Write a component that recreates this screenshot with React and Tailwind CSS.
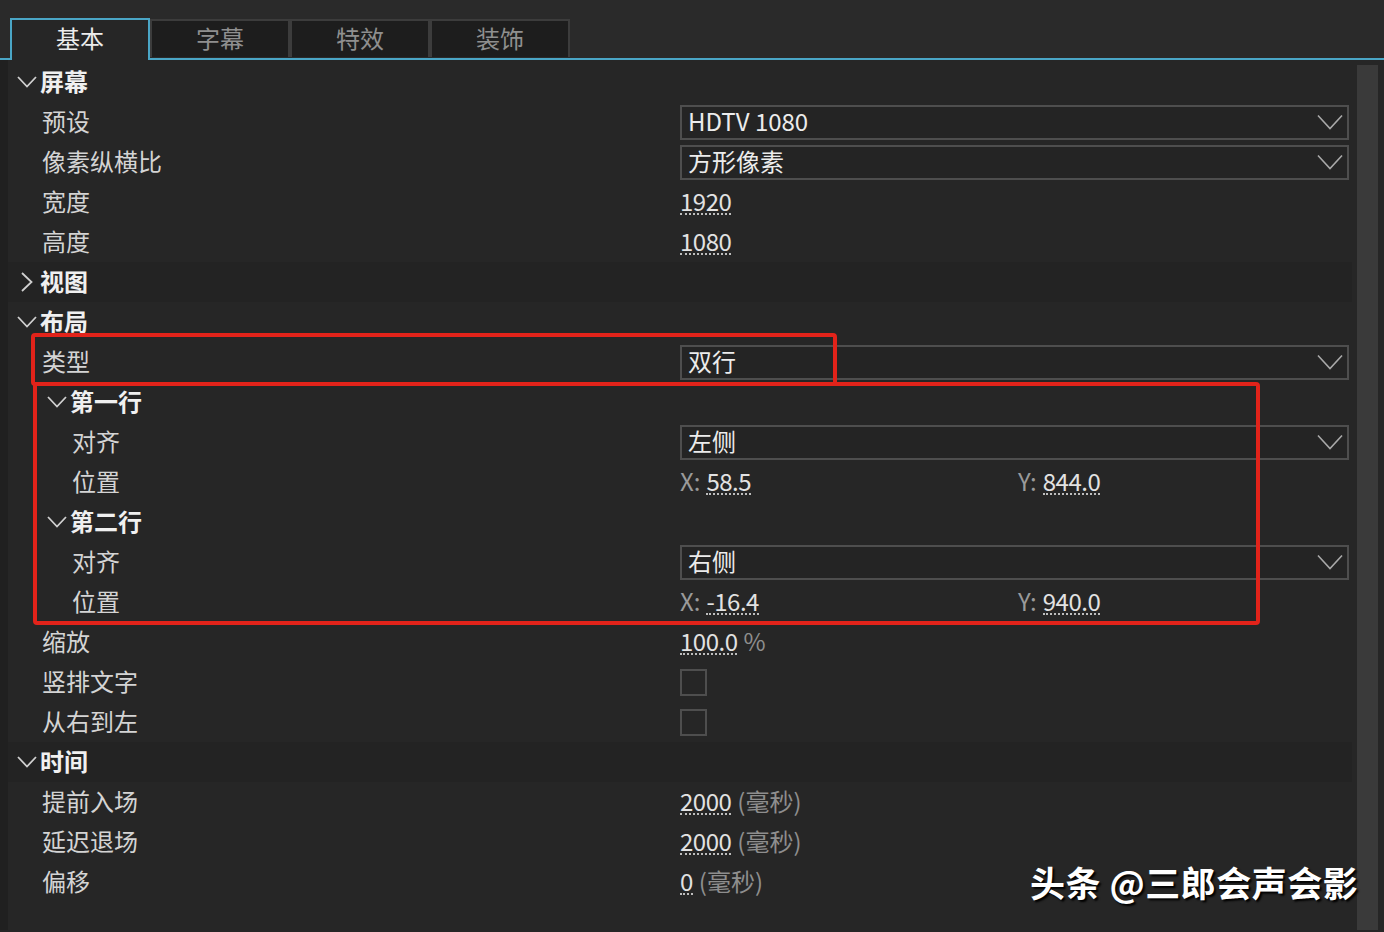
import React from "react";

const FONT = { fontFamily: '"Noto Sans CJK SC", "Noto Sans", sans-serif' };

function ChevDown() {
  return (
    <svg width="20" height="12" viewBox="0 0 20 12">
      <polyline points="1,1 10,10.5 19,1" fill="none" stroke="#d0d0d0" strokeWidth="1.8" />
    </svg>
  );
}
function ChevRight() {
  return (
    <svg width="12" height="20" viewBox="0 0 12 20">
      <polyline points="1,1 10.5,10 1,19" fill="none" stroke="#d0d0d0" strokeWidth="1.8" />
    </svg>
  );
}
function DropChev() {
  return (
    <svg width="26" height="16" viewBox="0 0 26 16">
      <polyline points="1,1.5 13,14.5 25,1.5" fill="none" stroke="#a8a8a8" strokeWidth="1.6" />
    </svg>
  );
}

function Num({ children }) {
  return (
    <span className="inline-block leading-[25px] border-b-2 border-dotted border-[#bdbdbd] text-[#e2e2e2] tracking-[-0.5px]">
      {children}
    </span>
  );
}

function Section({ label, open = true, nested = false, dark = false }) {
  return (
    <div className={`h-[40px] flex items-center pb-[3px] ${dark ? "bg-[#232323]" : ""}`}>
      <div className={`flex items-center ${nested ? "pl-[36px]" : "pl-[6px]"}`}>
        <div className="w-[26px] flex items-center justify-center pt-[2px]">
          {open ? <ChevDown /> : <ChevRight />}
        </div>
        <span className="text-[24px] font-bold text-[#f0f0f0] leading-none">{label}</span>
      </div>
    </div>
  );
}

function Row({ label, nested = false, children }) {
  return (
    <div className="h-[40px] flex items-center">
      <div className={`w-[672px] shrink-0 ${nested ? "pl-[64px]" : "pl-[34px]"} text-[24px] text-[#d4d4d4] leading-none pb-[3px]`}>
        {label}
      </div>
      <div className="flex-1 flex items-center">{children}</div>
    </div>
  );
}

function Dropdown({ value }) {
  return (
    <div className="w-[669px] h-[35px] border-2 border-[#4e4e4e] bg-[#242424] flex items-center justify-between pl-[6px] pr-[4px]">
      <span className="text-[24px] text-[#ececec] leading-none pb-[2px]">{value}</span>
      <DropChev />
    </div>
  );
}

function Pos({ x, y }) {
  return (
    <div className="flex items-center text-[24px] leading-none pb-[2px]">
      <div className="w-[338px] flex items-center gap-[6px]">
        <span className="text-[#9a9a9a]">X:</span>
        <Num>{x}</Num>
      </div>
      <div className="flex items-center gap-[6px]">
        <span className="text-[#9a9a9a]">Y:</span>
        <Num>{y}</Num>
      </div>
    </div>
  );
}

function Checkbox() {
  return <div className="w-[27px] h-[27px] border-2 border-[#4e4e4e]" />;
}

function Ms({ v }) {
  return (
    <div className="flex items-center gap-[6px] text-[24px] leading-none pb-[2px]">
      <Num>{v}</Num>
      <span className="text-[#8e8e8e]">(毫秒)</span>
    </div>
  );
}

export default function App() {
  const tabs = ["基本", "字幕", "特效", "装饰"];
  return (
    <div className="w-[1384px] h-[932px] bg-[#262626] relative overflow-hidden" style={FONT}>
      {/* tab bar */}
      <div className="h-[60px] bg-[#2a2a2a] flex items-end pl-[10px] border-b-2 border-[#4aa6c6]">
        {tabs.map((t, i) =>
          i === 0 ? (
            <div
              key={t}
              className="w-[140px] h-[42px] -mb-[2px] bg-[#262626] border-2 border-b-0 border-[#4aa6c6] flex items-center justify-center text-[24px] text-[#ececec] pb-[4px]"
            >
              {t}
            </div>
          ) : (
            <div
              key={t}
              className="w-[140px] h-[38px] mb-[1px] bg-[#1d1d1d] border-2 border-b-0 border-[#3c3c3c] flex items-center justify-center text-[24px] text-[#8f8f8f] pb-[2px]"
            >
              {t}
            </div>
          )
        )}
      </div>

      {/* body */}
      <div className="flex h-[870px]">
        <div className="w-[8px] bg-[#202020] shrink-0" />
        <div className="flex-1 pt-[2px]">
          <Section label="屏幕" />
          <Row label="预设"><Dropdown value="HDTV 1080" /></Row>
          <Row label="像素纵横比"><Dropdown value="方形像素" /></Row>
          <Row label="宽度"><span className="text-[24px] leading-none pb-[2px]"><Num>1920</Num></span></Row>
          <Row label="高度"><span className="text-[24px] leading-none pb-[2px]"><Num>1080</Num></span></Row>
          <Section label="视图" open={false} dark />
          <Section label="布局" />
          <Row label="类型"><Dropdown value="双行" /></Row>
          <Section label="第一行" nested />
          <Row label="对齐" nested><Dropdown value="左侧" /></Row>
          <Row label="位置" nested><Pos x="58.5" y="844.0" /></Row>
          <Section label="第二行" nested />
          <Row label="对齐" nested><Dropdown value="右侧" /></Row>
          <Row label="位置" nested><Pos x="-16.4" y="940.0" /></Row>
          <Row label="缩放">
            <div className="flex items-center gap-[6px] text-[24px] leading-none pb-[2px]">
              <Num>100.0</Num>
              <span className="text-[#8e8e8e]">%</span>
            </div>
          </Row>
          <Row label="竖排文字"><Checkbox /></Row>
          <Row label="从右到左"><Checkbox /></Row>
          <Section label="时间" dark />
          <Row label="提前入场"><Ms v="2000" /></Row>
          <Row label="延迟退场"><Ms v="2000" /></Row>
          <Row label="偏移"><Ms v="0" /></Row>
        </div>
        <div className="w-[32px] shrink-0 pl-[5px] pt-[5px]">
          <div className="w-[21px] h-full bg-[#3a3a3a]" />
        </div>
      </div>

      {/* red annotation boxes */}
      <div className="absolute left-[31px] top-[333px] w-[806px] h-[53px] border-[4px] border-[#e2231a] rounded-[4px] pointer-events-none" />
      <div className="absolute left-[33px] top-[382px] w-[1227px] h-[243px] border-[4px] border-[#e2231a] rounded-[4px] pointer-events-none" />

      {/* watermark */}
      <div className="absolute left-[1030px] top-[864px] text-[35px] font-bold text-white leading-none whitespace-nowrap tracking-[0.5px] [text-shadow:2px_2px_2px_#000]">
        头条 @三郎会声会影
      </div>
    </div>
  );
}
